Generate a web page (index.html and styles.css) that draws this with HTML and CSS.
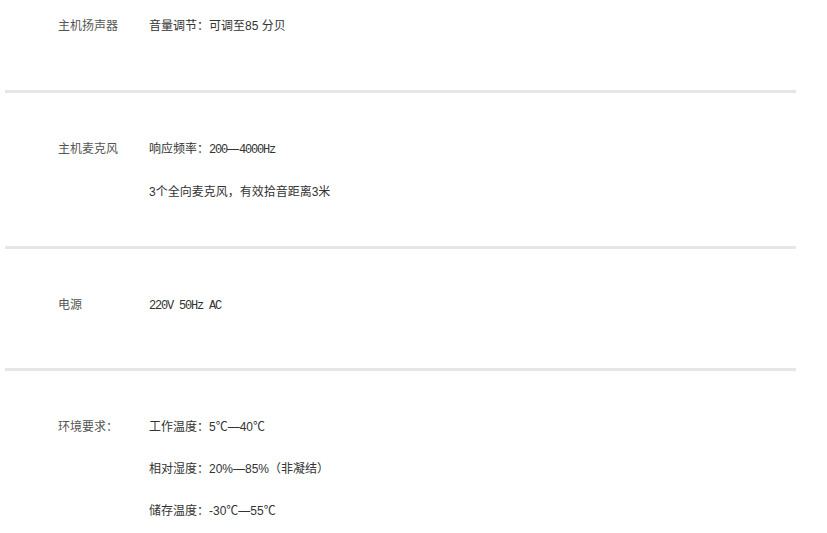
FILE: index.html
```html
<!DOCTYPE html>
<html lang="zh-CN">
<head>
<meta charset="utf-8">
<title>参数</title>
<link rel="stylesheet" href="styles.css">
</head>
<body>
<div class="spec">
  <div class="row first">
    <div class="label">主机扬声器</div>
    <div class="vals">
      <p>音量调节：可调至85 分贝</p>
    </div>
  </div>
  <div class="row">
    <div class="label">主机麦克风</div>
    <div class="vals">
      <p>响应频率：<span class="mono">200</span>—<span class="mono">4000Hz</span></p>
      <p>3个全向麦克风，有效拾音距离3米</p>
    </div>
  </div>
  <div class="row">
    <div class="label">电源</div>
    <div class="vals">
      <p><span class="mono">220V 50Hz AC</span></p>
    </div>
  </div>
  <div class="row last">
    <div class="label">环境要求：</div>
    <div class="vals">
      <p>工作温度：5℃—40℃</p>
      <p>相对湿度：20%—85%（非凝结）</p>
      <p>储存温度：-30℃—55℃</p>
    </div>
  </div>
</div>
</body>
</html>
```

FILE: styles.css
```css
html, body {
  margin: 0;
  padding: 0;
  background: #ffffff;
}
body {
  font-family: "Liberation Sans", "Noto Sans CJK SC", sans-serif;
  font-size: 12px;
  color: #333333;
}
.spec {
  width: 791px;
  margin-left: 5px;
}
.row {
  display: flex;
  padding: 35px 0 33px 0;
  min-height: 51px;
  border-bottom: 3px solid #e6e6e6;
}
.row.first {
  padding-top: 5px;
  min-height: 52px;
}
.row.last {
  padding-bottom: 0;
  border-bottom: none;
}
.label {
  width: 91px;
  padding-left: 53px;
  flex: none;
  line-height: 42px;
  color: #555555;
}
.vals {
  flex: 1;
}
.vals p {
  margin: 0;
  line-height: 42px;
}
.mono {
  font-family: "Liberation Mono", monospace;
  letter-spacing: -1.2px;
}
```
